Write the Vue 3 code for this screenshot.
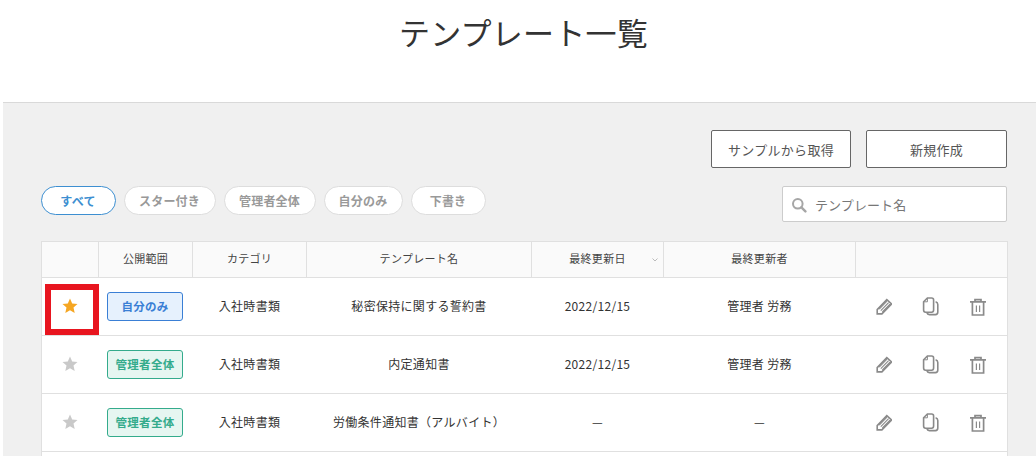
<template>
  <div class="page">
    <header class="page-head">
      <h1 class="title">テンプレート一覧</h1>
    </header>

    <main class="panel">
      <div class="actions">
        <button class="btn btn-sample">サンプルから取得</button>
        <button class="btn btn-new">新規作成</button>
      </div>

      <div class="filters">
        <div class="chips">
          <span
            v-for="chip in chips"
            :key="chip.label"
            class="chip"
            :class="{ active: chip.active }"
            :style="{ width: chip.width + 'px' }"
          >{{ chip.label }}</span>
        </div>
        <label class="search">
          <svg class="search-icon" width="16" height="16" viewBox="0 0 16 16">
            <circle cx="6.8" cy="6.8" r="4.8" fill="none" stroke="#a6a6a6" stroke-width="2" />
            <path d="M10.4 10.4 14.4 14.4" stroke="#a6a6a6" stroke-width="2.4" stroke-linecap="round" />
          </svg>
          <span class="placeholder">テンプレート名</span>
        </label>
      </div>

      <table class="list">
        <colgroup>
          <col class="c-star" />
          <col class="c-scope" />
          <col class="c-cat" />
          <col class="c-name" />
          <col class="c-date" />
          <col class="c-user" />
          <col class="c-ops" />
        </colgroup>
        <thead>
          <tr>
            <th></th>
            <th><span class="th-label">公開範囲</span></th>
            <th><span class="th-label">カテゴリ</span></th>
            <th><span class="th-label">テンプレート名</span></th>
            <th>
              <span class="th-label">最終更新日</span>
              <svg class="sort" width="6" height="4" viewBox="0 0 6 4">
                <path d="M.5.5 3 3 5.5.5" fill="none" stroke="#bbb" stroke-width="1" />
              </svg>
            </th>
            <th><span class="th-label">最終更新者</span></th>
            <th></th>
          </tr>
        </thead>
        <tbody>
          <tr v-for="row in rows" :key="row.name">
            <td>
              <svg class="star" width="16" height="16" viewBox="0 0 16 16">
                <path
                  :fill="row.starred ? '#f5a623' : '#c9c9c9'"
                  d="M8 .6 10.2 5.5 15.5 6.1 11.5 9.6 12.7 15 8 12.2 3.3 15 4.5 9.6.5 6.1 5.8 5.5Z"
                />
              </svg>
            </td>
            <td>
              <span class="badge" :class="row.scope === '自分のみ' ? 'badge-self' : 'badge-admin'">{{ row.scope }}</span>
            </td>
            <td><span class="cell">{{ row.category }}</span></td>
            <td><span class="cell">{{ row.name }}</span></td>
            <td><span class="cell">{{ row.date }}</span></td>
            <td><span class="cell">{{ row.user }}</span></td>
            <td>
              <div class="ops">
                <svg class="op-edit" width="18" height="18" viewBox="0 0 18 18" fill="none" stroke="#8a8a8a">
                  <path stroke-width="1.6" d="M3.2 12.6 12.8 2.6 17.6 6.9 7.9 16.9H3.2Z" />
                  <path stroke-width="1.1" d="M5.2 12.2 13 4.2M6.8 13.6 14.6 5.6M8.4 15 16 7.2" />
                </svg>
                <svg width="18" height="19" viewBox="0 0 18 19" fill="none" stroke="#8a8a8a" stroke-width="1.6">
                  <path d="M6.4 1H10.6Q12.6 1 12.6 3V13Q12.6 15.2 10.6 15.2H4.6Q2.6 15.2 2.6 13V4.8Z" />
                  <path d="M6.4 1V4.8H2.6" stroke-width="1" />
                  <path d="M14.6 4.8Q16.8 5.4 16.8 7.4V15Q16.8 17.6 14.4 17.6H8.4Q6.4 17.6 5.8 15.6" />
                </svg>
                <svg width="18" height="18" viewBox="0 0 18 18" fill="none" stroke="#8a8a8a" stroke-width="1.7">
                  <path d="M2 3.8H18M7 3.6V1.6H13V3.6M4.4 4V17H15.6V4" />
                  <path stroke-width="1.2" d="M8.4 7.4V14M11.6 7.4V14" />
                </svg>
              </div>
            </td>
          </tr>
          <tr class="filler"><td colspan="7"></td></tr>
        </tbody>
      </table>
    </main>

    <div class="highlight"></div>
  </div>
</template>

<script setup>
const chips = [
  { label: 'すべて', width: 75, active: true },
  { label: 'スター付き', width: 92 },
  { label: '管理者全体', width: 92 },
  { label: '自分のみ', width: 79 },
  { label: '下書き', width: 75 },
]

const rows = [
  { starred: true, scope: '自分のみ', category: '入社時書類', name: '秘密保持に関する誓約書', date: '2022/12/15', user: '管理者 労務' },
  { starred: false, scope: '管理者全体', category: '入社時書類', name: '内定通知書', date: '2022/12/15', user: '管理者 労務' },
  { starred: false, scope: '管理者全体', category: '入社時書類', name: '労働条件通知書（アルバイト）', date: '—', user: '—' },
]
</script>

<style>
html,
body {
  margin: 0;
  background: #fff;
  overflow: hidden;
}
</style>

<style scoped>
.page {
  position: relative;
  height: 456px;
  overflow: hidden;
  font-family: "Noto Sans CJK JP", "Noto Sans", sans-serif;
  color: #333;
}
.page-head {
  height: 102px;
  padding-left: 11px;
}
.title {
  margin: 0;
  padding-top: 9px;
  text-align: center;
  font-size: 31px;
  letter-spacing: 0.25px;
  line-height: 46px;
  font-weight: 400;
  color: #333;
}
.panel {
  margin-left: 3px;
  height: 354px;
  box-sizing: border-box;
  padding: 27px 29px 0 38px;
  background: #f0f0f0;
  border-top: 1px solid #d9d9d9;
}
.actions {
  display: flex;
  justify-content: flex-end;
  gap: 15px;
}
.btn {
  height: 38px;
  box-sizing: border-box;
  border: 1px solid #666;
  border-radius: 2px;
  background: #fff;
  color: #555;
  font-family: inherit;
  font-size: 13px;
  letter-spacing: 0.3px;
  padding: 0;
}
.btn-sample {
  width: 140px;
}
.btn-new {
  width: 141px;
}
.filters {
  display: flex;
  justify-content: space-between;
  align-items: flex-start;
  margin-top: 18px;
}
.chips {
  display: flex;
  gap: 8px;
}
.chip {
  height: 29px;
  box-sizing: border-box;
  display: flex;
  align-items: center;
  justify-content: center;
  padding-right: 1px;
  border: 1px solid #ddd;
  border-radius: 15px;
  background: #fff;
  color: #999;
  font-size: 12px;
  letter-spacing: 0.2px;
  font-weight: 700;
}
.chip.active {
  border-color: #3d8fd1;
  color: #3d8fd1;
}
.search {
  width: 225px;
  height: 36px;
  box-sizing: border-box;
  display: flex;
  align-items: center;
  gap: 8px;
  padding-left: 8px;
  background: #fff;
  border: 1px solid #ccc;
  border-radius: 2px;
}
.search-icon {
  margin-top: 2px;
}
.placeholder {
  font-size: 13px;
  letter-spacing: 0.1px;
  color: #777;
}
.list {
  width: 966px;
  margin-top: 19px;
  table-layout: fixed;
  border-collapse: collapse;
  background: #fff;
  font-size: 12px;
  letter-spacing: 0.3px;
  color: #333;
}
.c-star { width: 57px; }
.c-scope { width: 94px; }
.c-cat { width: 114px; }
.c-name { width: 225px; }
.c-date { width: 132px; }
.c-user { width: 192px; }
.c-ops { width: 152px; }
.list th {
  height: 36px;
  padding: 0;
  box-sizing: border-box;
  position: relative;
  background: #fafafa;
  border: 1px solid #e0e0e0;
  font-size: 11px;
  letter-spacing: 0.3px;
  font-weight: 400;
  color: #444;
}
.th-label {
  display: block;
  margin-top: -3px;
}
.cell {
  display: block;
  margin-top: -2px;
}
.sort {
  position: absolute;
  right: 5px;
  top: 16px;
}
.list td {
  height: 58px;
  padding: 0;
  box-sizing: border-box;
  text-align: center;
  border-top: 1px solid #e0e0e0;
  border-bottom: 1px solid #e0e0e0;
}
.list td:first-child {
  border-left: 1px solid #e0e0e0;
}
.list td:last-child {
  border-right: 1px solid #e0e0e0;
}
.star {
  display: block;
  margin: -1px auto 0;
}
.badge {
  display: inline-flex;
  align-items: center;
  justify-content: center;
  width: 76px;
  height: 29px;
  box-sizing: border-box;
  margin: 0 2px 0 0;
  padding: 0 0 2px 1px;
  border-radius: 3px;
  border: 1px solid;
  font-size: 11.5px;
  font-weight: 700;
  vertical-align: middle;
}
.badge-self {
  color: #3a7fd5;
  background: #e6f1fd;
  border-color: #3a7fd5;
}
.badge-admin {
  color: #34ab8c;
  background: #e6f6f1;
  border-color: #34ab8c;
}
.ops {
  display: flex;
  align-items: center;
  justify-content: flex-end;
  gap: 29px;
  padding-right: 21px;
}
.op-edit {
  margin-top: -1px;
}
.filler td {
  height: 58px;
}
.highlight {
  position: absolute;
  left: 45px;
  top: 284px;
  width: 54px;
  height: 51px;
  box-sizing: border-box;
  border: 6px solid #e8151f;
}
</style>
